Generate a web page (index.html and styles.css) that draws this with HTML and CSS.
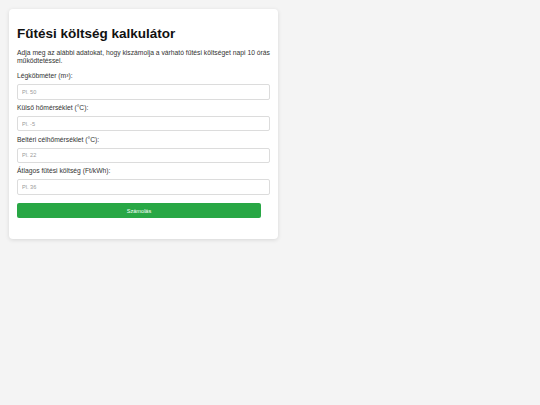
FILE: index.html
```html
<!DOCTYPE html>
<html lang="hu">
<head>
<meta charset="utf-8">
<title>Fűtési költség kalkulátor</title>
<link rel="stylesheet" href="styles.css">
</head>
<body>
  <main class="card">
    <h1 class="title">Fűtési költség kalkulátor</h1>
    <p class="intro">Adja meg az alábbi adatokat, hogy kiszámolja a várható fűtési költséget napi 10 órás működtetéssel.</p>
    <form class="form">
      <label class="field-label" for="volume">Légköbméter (m³):</label>
      <input class="field-input" id="volume" type="number" placeholder="Pl. 50">
      <label class="field-label" for="outside">Külső hőmérséklet (°C):</label>
      <input class="field-input" id="outside" type="number" placeholder="Pl. -5">
      <label class="field-label" for="inside">Beltéri célhőmérséklet (°C):</label>
      <input class="field-input" id="inside" type="number" placeholder="Pl. 22">
      <label class="field-label" for="price">Átlagos fűtési költség (Ft/kWh):</label>
      <input class="field-input" id="price" type="number" placeholder="Pl. 36">
      <button class="submit" type="button">Számolás</button>
    </form>
  </main>
</body>
</html>
```

FILE: styles.css
```css
html, body {
  margin: 0;
}

body {
  background: #f4f4f4;
  padding: 9px;
  font-family: "Liberation Sans", Arial, sans-serif;
  color: #333;
}

.card {
  width: 253px;
  padding: 8px;
  background: #fff;
  border-radius: 4px;
  box-shadow: 0 1px 4px rgba(0, 0, 0, 0.12);
}

.title {
  margin: 9px 0 7px;
  font-size: 13.5px;
  font-weight: bold;
  line-height: 15.5px;
  color: #111;
}

.intro {
  margin: 0 0 7.5px;
  font-size: 6.75px;
  line-height: 8px;
}

.form {
  display: flex;
  flex-direction: column;
  align-items: flex-start;
}

.field-label {
  display: block;
  margin: 0 0 4.25px;
  font-size: 6.75px;
  line-height: 7.75px;
}

.field-input {
  box-sizing: border-box;
  width: 253px;
  height: 15.5px;
  margin: 0 0 4.25px;
  padding: 0 4px;
  border: 1px solid #dcdcdc;
  border-radius: 2px;
  font-family: inherit;
  font-size: 5.6px;
  color: #333;
  background: #fff;
}

.field-input::placeholder {
  color: #9a9a9a;
}

.field-input::-webkit-outer-spin-button,
.field-input::-webkit-inner-spin-button {
  -webkit-appearance: none;
  margin: 0;
}

.submit {
  width: 244px;
  height: 14.7px;
  margin: 4.35px 0 13px;
  padding: 0;
  border: none;
  border-radius: 2px;
  background: #28a745;
  color: #fff;
  font-family: inherit;
  font-size: 5.6px;
  cursor: pointer;
}
```
